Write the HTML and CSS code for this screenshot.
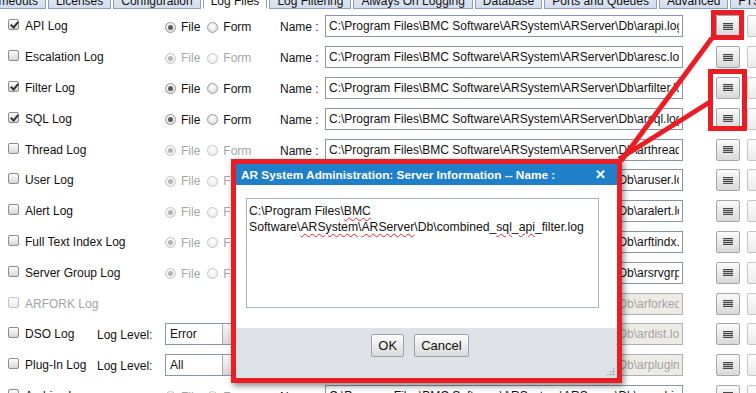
FILE: index.html
```html
<!DOCTYPE html>
<html>
<head>
    <meta charset="utf-8">
    <title>Server Information - Log Files</title>
    <link rel="stylesheet" href="styles.css">
</head>
<body>
    <div class="tabs">
        <div class="tab tab-first">Timeouts</div>
        <div class="tab">Licenses</div>
        <div class="tab">Configuration</div>
        <div class="tab active">Log Files</div>
        <div class="tab">Log Filtering</div>
        <div class="tab">Always On Logging</div>
        <div class="tab">Database</div>
        <div class="tab">Ports and Queues</div>
        <div class="tab">Advanced</div>
        <div class="tab">FTS</div>
    </div>

    <div class="panel">
        <div class="row">
            <label class="check"><span class="box checked"></span>API Log</label>
            <div class="choice">
                <span class="opt"><span class="radio on"></span>File</span>
                <span class="opt"><span class="radio"></span>Form</span>
            </div>
            <span class="name-label">Name :</span>
            <input class="path" type="text" value="C:\Program Files\BMC Software\ARSystem\ARServer\Db\arapi.log">
            <div class="tools"><span class="list-btn"></span><span class="blank-btn"></span></div>
        </div>
        <div class="row">
            <label class="check"><span class="box"></span>Escalation Log</label>
            <div class="choice off">
                <span class="opt"><span class="radio on"></span>File</span>
                <span class="opt"><span class="radio"></span>Form</span>
            </div>
            <span class="name-label">Name :</span>
            <input class="path" type="text" value="C:\Program Files\BMC Software\ARSystem\ARServer\Db\aresc.log">
            <div class="tools"><span class="list-btn"></span><span class="blank-btn"></span></div>
        </div>
        <div class="row">
            <label class="check"><span class="box checked"></span>Filter Log</label>
            <div class="choice">
                <span class="opt"><span class="radio on"></span>File</span>
                <span class="opt"><span class="radio"></span>Form</span>
            </div>
            <span class="name-label">Name :</span>
            <input class="path" type="text" value="C:\Program Files\BMC Software\ARSystem\ARServer\Db\arfilter.log">
            <div class="tools"><span class="list-btn"></span><span class="blank-btn"></span></div>
        </div>
        <div class="row">
            <label class="check"><span class="box checked"></span>SQL Log</label>
            <div class="choice">
                <span class="opt"><span class="radio on"></span>File</span>
                <span class="opt"><span class="radio"></span>Form</span>
            </div>
            <span class="name-label">Name :</span>
            <input class="path" type="text" value="C:\Program Files\BMC Software\ARSystem\ARServer\Db\arsql.log">
            <div class="tools"><span class="list-btn"></span><span class="blank-btn"></span></div>
        </div>
        <div class="row">
            <label class="check"><span class="box"></span>Thread Log</label>
            <div class="choice off">
                <span class="opt"><span class="radio on"></span>File</span>
                <span class="opt"><span class="radio"></span>Form</span>
            </div>
            <span class="name-label">Name :</span>
            <input class="path" type="text" value="C:\Program Files\BMC Software\ARSystem\ARServer\Db\arthread.log">
            <div class="tools"><span class="list-btn"></span><span class="blank-btn"></span></div>
        </div>
        <div class="row">
            <label class="check"><span class="box"></span>User Log</label>
            <div class="choice off">
                <span class="opt"><span class="radio on"></span>File</span>
                <span class="opt"><span class="radio"></span>Form</span>
            </div>
            <span class="name-label">Name :</span>
            <input class="path" type="text" value="C:\Program Files\BMC Software\ARSystem\ARServer\Db\aruser.log">
            <div class="tools"><span class="list-btn"></span><span class="blank-btn"></span></div>
        </div>
        <div class="row">
            <label class="check"><span class="box"></span>Alert Log</label>
            <div class="choice off">
                <span class="opt"><span class="radio on"></span>File</span>
                <span class="opt"><span class="radio"></span>Form</span>
            </div>
            <span class="name-label">Name :</span>
            <input class="path" type="text" value="C:\Program Files\BMC Software\ARSystem\ARServer\Db\aralert.log">
            <div class="tools"><span class="list-btn"></span><span class="blank-btn"></span></div>
        </div>
        <div class="row">
            <label class="check"><span class="box"></span>Full Text Index Log</label>
            <div class="choice off">
                <span class="opt"><span class="radio on"></span>File</span>
                <span class="opt"><span class="radio"></span>Form</span>
            </div>
            <span class="name-label">Name :</span>
            <input class="path" type="text" value="C:\Program Files\BMC Software\ARSystem\ARServer\Db\arftindx.log">
            <div class="tools"><span class="list-btn"></span><span class="blank-btn"></span></div>
        </div>
        <div class="row">
            <label class="check"><span class="box"></span>Server Group Log</label>
            <div class="choice off">
                <span class="opt"><span class="radio on"></span>File</span>
                <span class="opt"><span class="radio"></span>Form</span>
            </div>
            <span class="name-label">Name :</span>
            <input class="path" type="text" value="C:\Program Files\BMC Software\ARSystem\ARServer\Db\arsrvgrp.log">
            <div class="tools"><span class="list-btn"></span><span class="blank-btn"></span></div>
        </div>
        <div class="row">
            <label class="check disabled"><span class="box"></span>ARFORK Log</label>
            <span class="name-label">Name :</span>
            <input class="path" type="text" value="C:\Program Files\BMC Software\ARSystem\ARServer\Db\arforked.log" disabled>
            <div class="tools"><span class="list-btn"></span><span class="blank-btn"></span></div>
        </div>
        <div class="row row-level">
            <label class="check"><span class="box"></span>DSO Log</label>
            <span class="level-label">Log Level:</span>
            <div class="level"><span class="level-value">Error</span><span class="level-arrow"></span></div>
            <input class="path" type="text" value="C:\Program Files\BMC Software\ARSystem\ARServer\Db\ardist.log" disabled>
            <div class="tools"><span class="list-btn"></span><span class="blank-btn"></span></div>
        </div>
        <div class="row row-level">
            <label class="check"><span class="box"></span>Plug-In Log</label>
            <span class="level-label">Log Level:</span>
            <div class="level"><span class="level-value">All</span><span class="level-arrow"></span></div>
            <input class="path" type="text" value="C:\Program Files\BMC Software\ARSystem\ARServer\Db\arplugin.log" disabled>
            <div class="tools"><span class="list-btn"></span><span class="blank-btn"></span></div>
        </div>
        <div class="row">
            <label class="check"><span class="box"></span>Archive Log</label>
            <div class="choice off">
                <span class="opt"><span class="radio on"></span>File</span>
                <span class="opt"><span class="radio"></span>Form</span>
            </div>
            <span class="name-label">Name :</span>
            <input class="path" type="text" value="C:\Program Files\BMC Software\ARSystem\ARServer\Db\ararchive.log">
            <div class="tools"><span class="list-btn"></span><span class="blank-btn"></span></div>
        </div>
    </div>

    <div class="dialog">
        <div class="dialog-head">
            <span>AR System Administration: Server Information -- Name :</span>
            <span class="close">&#x2715;</span>
        </div>
        <div class="dialog-body">
            <div class="dialog-text">C:\Program Files\<span class="spell">BMC</span> Software\<span class="spell">ARSystem</span>\<span class="spell">ARServer</span>\Db\combined_<span class="spell">sql</span>_<span class="spell">api</span>_filter.log</div>
        </div>
        <div class="dialog-foot">
            <button class="dlg-btn ok">OK</button>
            <button class="dlg-btn">Cancel</button>
            <span class="grip"></span>
        </div>
    </div>

    <!-- callout marks drawn over the screen -->
    <svg class="callouts" width="756" height="393" viewBox="0 0 756 393">
        <rect x="713.5" y="12.5" width="28" height="25" />
        <rect x="710.5" y="71.5" width="34" height="57" />
        <line x1="621" y1="161" x2="712" y2="38" />
        <line x1="619" y1="159" x2="710" y2="102" />
    </svg>
</body>
</html>
```

FILE: styles.css
```css
* {
    margin: 0;
    padding: 0;
    box-sizing: border-box;
}

body {
    width: 756px;
    height: 393px;
    overflow: hidden;
    position: relative;
    background: #fff;
    font-family: "Liberation Sans", Arial, sans-serif;
    font-size: 12px;
    color: #111;
}

/* tab strip, cut off at the top */
.tabs {
    display: flex;
    align-items: flex-end;
    gap: 2px;
    height: 9px;
    overflow: hidden;
}

.tab {
    flex: none;
    padding: 5px 7px 0;
    line-height: 14px;
    border: 1px solid #8e9fb8;
    background: linear-gradient(#eef2fa, #d2dcec);
    color: #111;
}

.tab-first {
    margin-left: -19px;
}

.tab.active {
    background: #fff;
    border-bottom-color: #fff;
}

.panel {
    padding: 2px 0 0 8px;
}

.row {
    display: grid;
    grid-template-columns: 89px 68px 115px 45px 358px auto;
    align-items: center;
    height: 30.8px;
}

.check {
    grid-column: 1 / 3;
    display: flex;
    align-items: center;
    gap: 6px;
}

.check.disabled {
    color: #a3a3a3;
}

.check.disabled .box {
    border-color: #c4c4c4;
    background: linear-gradient(#fdfdfd, #ececec);
}

.row-level .check {
    grid-column: 1;
}

.box {
    position: relative;
    width: 11px;
    height: 11px;
    margin-top: -3px;
    border: 1px solid #8c8c8c;
    border-radius: 2px;
    background: linear-gradient(#fdfdfd, #d6d6d6);
}

.box.checked::after {
    content: "";
    position: absolute;
    left: 3px;
    top: 0;
    width: 3px;
    height: 6px;
    border: solid #333;
    border-width: 0 2px 2px 0;
    transform: rotate(40deg);
}

.choice {
    grid-column: 3;
    display: flex;
    align-items: center;
    gap: 7px;
    padding-top: 2px;
}

.opt {
    display: flex;
    align-items: center;
    gap: 5px;
}

.radio {
    position: relative;
    width: 11px;
    height: 11px;
    border-radius: 50%;
    border: 1px solid #9a9a9a;
    background: radial-gradient(circle at 50% 35%, #fff, #d4d4d4);
}

.radio.on::after {
    content: "";
    position: absolute;
    inset: 2px;
    border-radius: 50%;
    background: #5a5a5a;
}

.choice.off {
    color: #a5a5a5;
}

.choice.off .radio {
    border-color: #c6c6c6;
    background: radial-gradient(circle at 50% 35%, #fff, #e6e6e6);
}

.choice.off .radio.on::after {
    background: #b4b4b4;
}

.name-label {
    grid-column: 4;
    padding-top: 2px;
}

.path {
    grid-column: 5;
    width: 358px;
    height: 22px;
    padding: 0 3px;
    border: 1px solid #8796a6;
    background: #fff;
    font: inherit;
    color: #111;
    outline: none;
}

.path:disabled {
    background: #eeebe6;
    border-color: #a9b2bb;
    color: #a4a4a4;
}

.tools {
    grid-column: 6;
    display: flex;
    gap: 7px;
    padding-left: 33px;
}

.list-btn,
.blank-btn {
    flex: none;
    display: flex;
    align-items: center;
    justify-content: center;
    width: 24px;
    height: 22px;
    border: 1px solid #a2a6aa;
    border-radius: 2px;
    background: linear-gradient(#fbfbfb, #d8d8d8);
}

.list-btn::before {
    content: "";
    width: 10px;
    height: 7px;
    background: repeating-linear-gradient(#484848 0 1px, #bdbdbd 1px 2px);
}

.blank-btn {
    background: linear-gradient(#fdfdfd, #ebebeb);
    border-color: #c2c5c8;
}

.level-label {
    grid-column: 2;
    padding-top: 2px;
}

.level {
    grid-column: 3 / 5;
    display: flex;
    width: 120px;
    height: 22px;
    border: 1px solid #8796a6;
}

.level-value {
    width: 56px;
    padding-left: 4px;
    line-height: 20px;
    background: #fff;
}

.level-arrow {
    flex: 1;
    border-left: 1px solid #a9a9a9;
    background: linear-gradient(#f8f8f8, #d9d9d9);
}

/* popup dialog */
.dialog {
    position: absolute;
    left: 231px;
    top: 159px;
    width: 391px;
    border: 5px solid #e81d25;
    background: #fff;
    box-shadow: 2px 3px 6px rgba(0, 0, 0, 0.45);
}

.dialog-head {
    display: flex;
    align-items: center;
    justify-content: space-between;
    height: 21px;
    padding: 0 11px 0 5px;
    background: #1f80c9;
    color: #fff;
    font-size: 11.8px;
    font-weight: 700;
}

.close {
    font-size: 13px;
}

.dialog-body {
    height: 143px;
    padding: 13px 0 0 10px;
}

.dialog-text {
    width: 353px;
    height: 110px;
    padding: 4px 2px;
    border: 1px solid #aab5c0;
    font-size: 12.2px;
    line-height: 16px;
    color: #111;
}

.spell {
    text-decoration: underline wavy #e02525;
    text-decoration-thickness: 1px;
    text-underline-offset: 2px;
}

.dialog-foot {
    position: relative;
    display: flex;
    justify-content: center;
    align-items: flex-start;
    gap: 10px;
    height: 50px;
    padding: 6px 13px 0 0;
    background: #dee2e6;
}

.dlg-btn {
    height: 23px;
    min-width: 31px;
    padding: 0 6px;
    border: 1px solid #9aa1a8;
    border-radius: 2px;
    background: linear-gradient(#fdfdfd, #dadada);
    font: inherit;
    font-size: 13px;
    color: #111;
}

.grip {
    position: absolute;
    right: 2px;
    bottom: 2px;
    width: 9px;
    height: 9px;
    background: radial-gradient(#9aa3ab 0.9px, transparent 1.1px) 0 0 / 3px 3px;
    clip-path: polygon(100% 0, 100% 100%, 0 100%);
}

.callouts {
    position: absolute;
    left: 0;
    top: 0;
    pointer-events: none;
    fill: none;
    stroke: #ea1c24;
    stroke-width: 5;
}
```
